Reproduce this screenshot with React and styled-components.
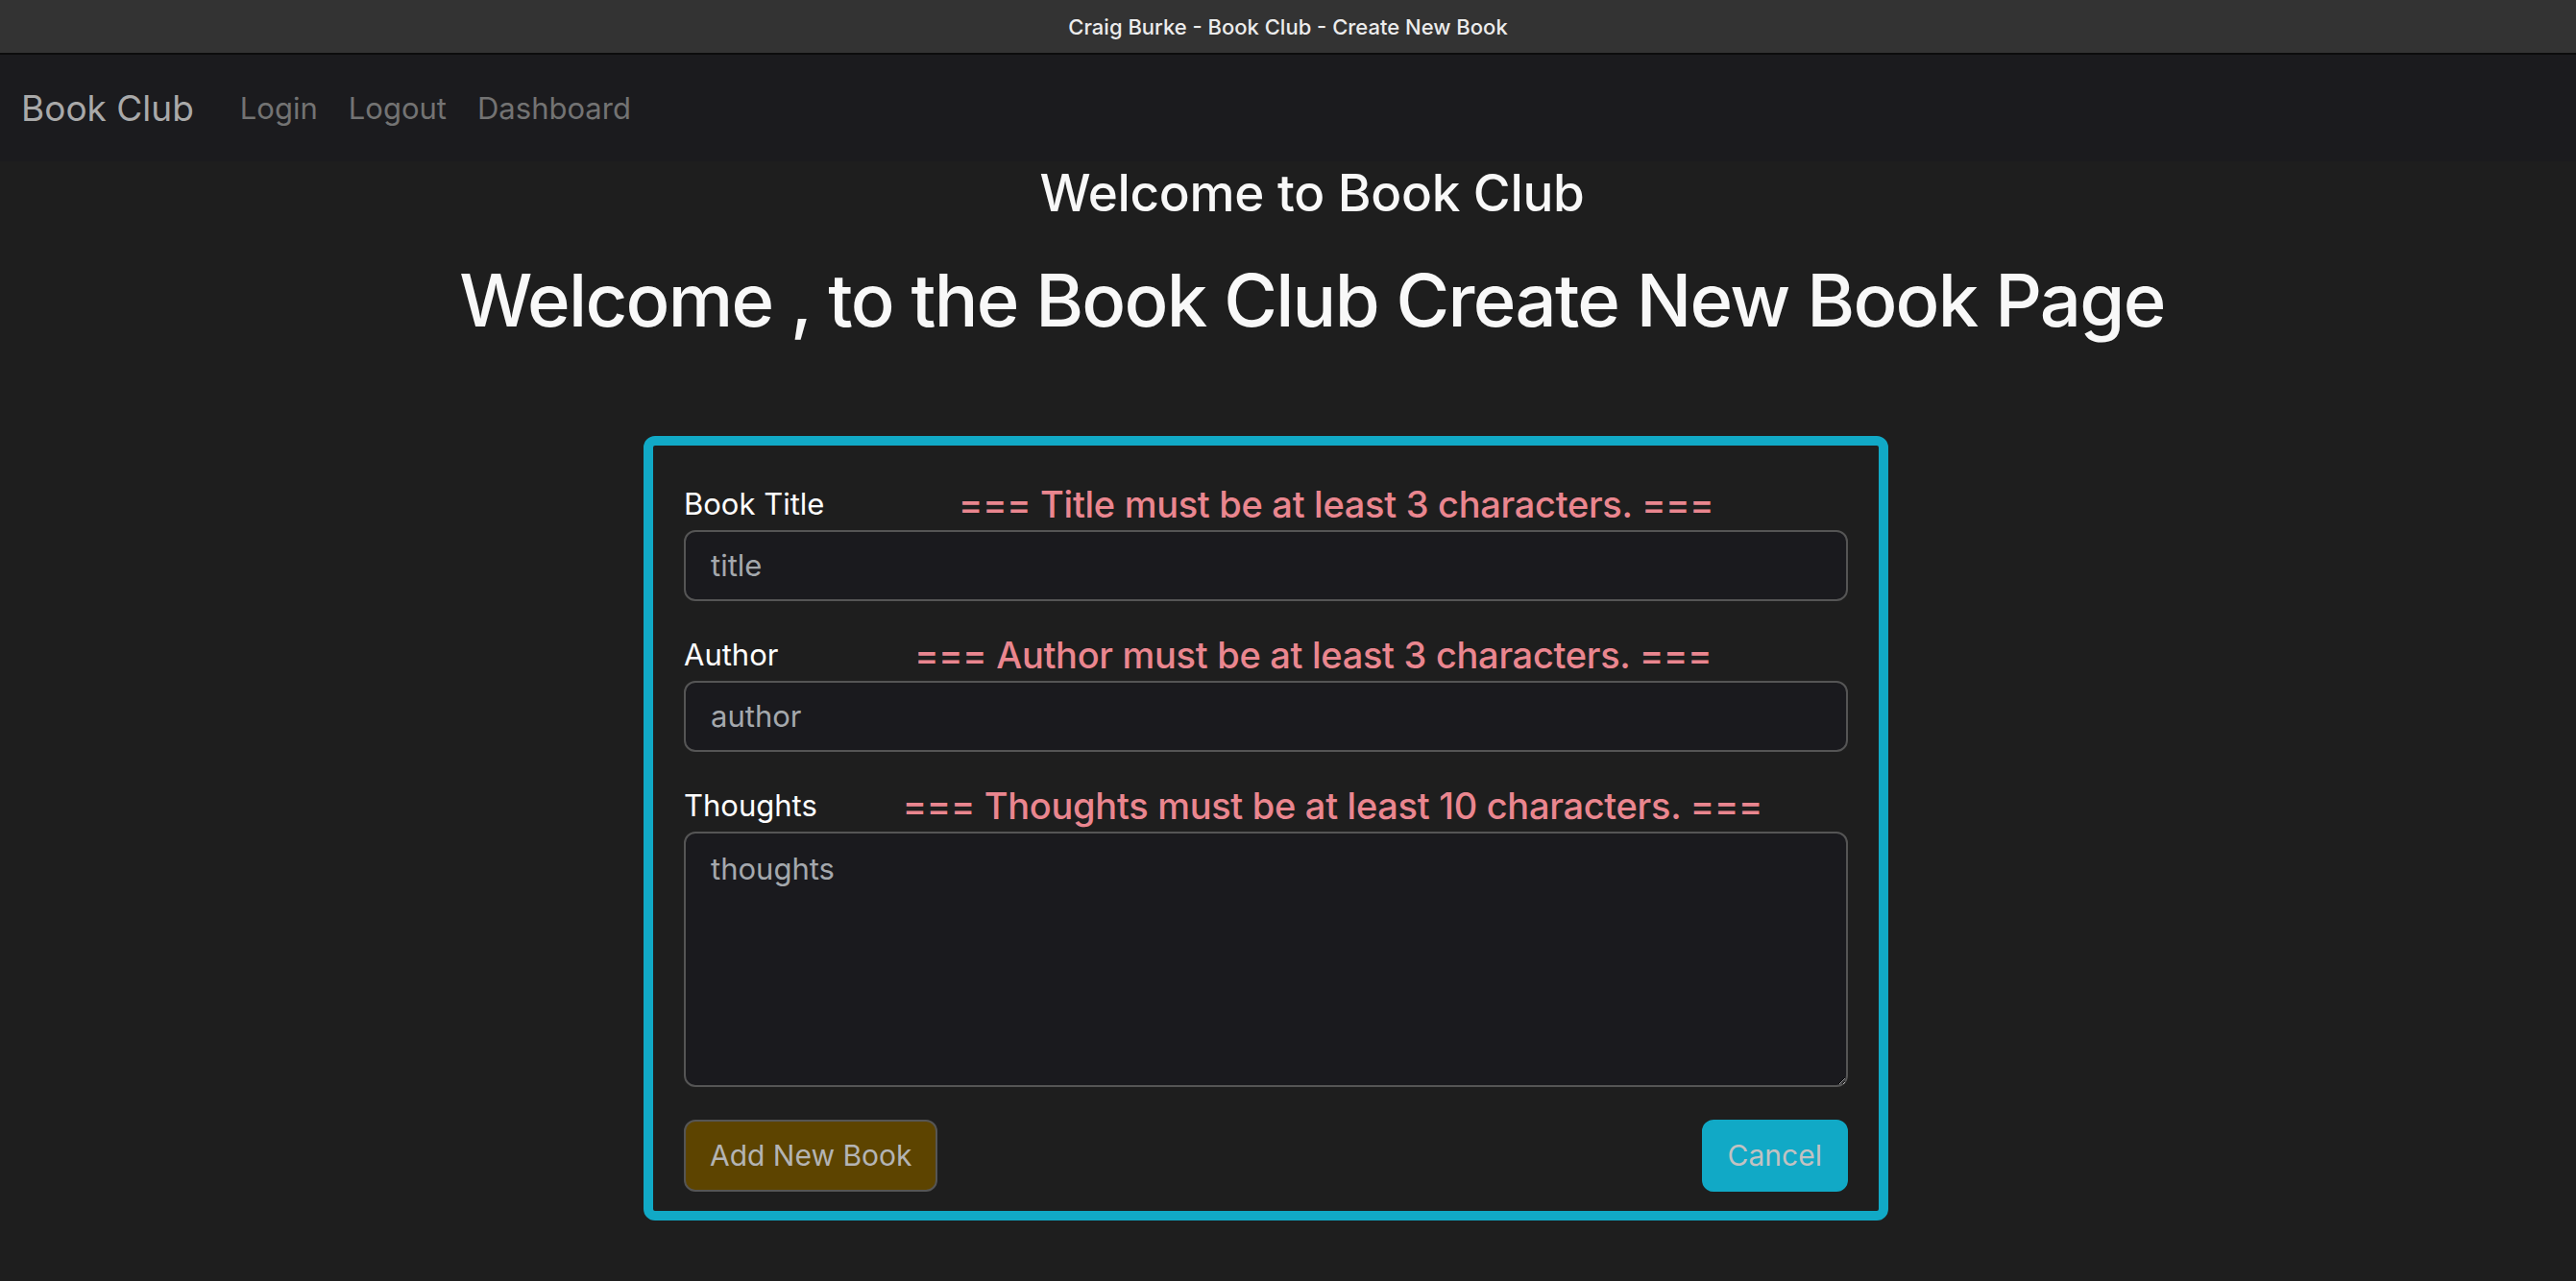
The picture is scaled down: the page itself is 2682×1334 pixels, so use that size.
import styled, { createGlobalStyle } from 'styled-components'

const GlobalStyle = createGlobalStyle`
  * { box-sizing: border-box; }
  html, body {
    margin: 0;
    padding: 0;
    background: #1e1e1e;
    font-family: Inter, "Noto Sans", "Liberation Sans", sans-serif;
    color: #f8f9fa;
  }
`

const Page = styled.div`
  min-height: 1334px;
  background: #1e1e1e;
`

const TitleBar = styled.div`
  height: 57px;
  background: #333333;
  border-bottom: 2px solid #0c0c0c;
  display: flex;
  align-items: center;
  justify-content: center;
  color: #ececec;
  font-size: 22px;
  font-weight: 500;
`

const NavBar = styled.nav`
  height: 111px;
  background: #1b1b1e;
  display: flex;
  align-items: center;
  padding: 0 22px;
`

const Brand = styled.a`
  font-size: 37px;
  color: #a9a9a9;
  text-decoration: none;
  margin-right: 48px;
`

const NavLinks = styled.div`
  display: flex;
  gap: 32px;
`

const NavLink = styled.a`
  font-size: 31px;
  color: #737373;
  text-decoration: none;
`

const Headings = styled.header`
  padding-left: 50px;
  text-align: center;
`

const SubTitle = styled.h3`
  margin: 2px 0 33px;
  font-size: 53px;
  font-weight: 500;
  letter-spacing: -0.3px;
  line-height: 1.2;
  color: #f8f8f8;
`

const MainTitle = styled.h1`
  margin: 0;
  font-size: 76px;
  font-weight: 500;
  letter-spacing: -1.7px;
  line-height: 1.2;
  color: #f8f8f8;
`

const FormCard = styled.form`
  width: 1296px;
  margin: 96px 0 0 670px;
  border: 10px solid #11a9c6;
  border-radius: 12px;
  padding: 37px 32px 20px;
`

const Group = styled.div`
  margin-bottom: 32px;
`

const LabelRow = styled.div`
  display: flex;
  align-items: center;
  height: 48px;
  margin-bottom: 3px;
`

const Label = styled.label`
  font-size: 31px;
  color: #ffffff;
`

const ErrorText = styled.span`
  flex: 1;
  text-align: center;
  font-size: 38px;
  font-weight: 500;
  letter-spacing: -0.3px;
  color: #ea868f;
`

const fieldStyles = `
  display: block;
  width: 100%;
  background: #1a1a1e;
  border: 2px solid #555;
  border-radius: 12px;
  color: #dee2e6;
  font-family: Inter, "Noto Sans", "Liberation Sans", sans-serif;
  font-size: 31px;
  padding: 0 26px;
  outline: none;
  &::placeholder { color: #a4a8ad; }
`

const Input = styled.input`
  ${fieldStyles}
  height: 74px;
`

const TextArea = styled.textarea`
  ${fieldStyles}
  height: 266px;
  padding-top: 14px;
  resize: vertical;
  line-height: 1.5;
`

const Actions = styled.div`
  display: flex;
  justify-content: space-between;
  padding-top: 2px;
`

const Button = styled.button`
  height: 75px;
  padding: 0 25px;
  border-radius: 12px;
  font-family: Inter, "Noto Sans", "Liberation Sans", sans-serif;
  font-size: 30px;
  color: ${({ $variant }) => ($variant === 'info' ? '#c2c2c2' : '#b4b4b4')};
  background: ${({ $variant }) => ($variant === 'info' ? '#11a9c6' : '#5d4400')};
  border: 2px solid ${({ $variant }) => ($variant === 'info' ? '#11a9c6' : '#555')};
  cursor: pointer;
`

const fields = [
  { label: 'Book Title', name: 'title', error: '=== Title must be at least 3 characters. ===' },
  { label: 'Author', name: 'author', error: '=== Author must be at least 3 characters. ===' },
]

const App = () => {
  return (
    <>
      <GlobalStyle />
      <Page>
        <TitleBar>Craig Burke - Book Club - Create New Book</TitleBar>
        <NavBar>
          <Brand href="#">Book Club</Brand>
          <NavLinks>
            <NavLink href="#">Login</NavLink>
            <NavLink href="#">Logout</NavLink>
            <NavLink href="#">Dashboard</NavLink>
          </NavLinks>
        </NavBar>
        <Headings>
          <SubTitle>Welcome to Book Club</SubTitle>
          <MainTitle>Welcome , to the Book Club Create New Book Page</MainTitle>
        </Headings>
        <FormCard onSubmit={(e) => e.preventDefault()}>
          {fields.map((f) => (
            <Group key={f.name}>
              <LabelRow>
                <Label htmlFor={f.name}>{f.label}</Label>
                <ErrorText>{f.error}</ErrorText>
              </LabelRow>
              <Input id={f.name} type="text" placeholder={f.name} />
            </Group>
          ))}
          <Group>
            <LabelRow>
              <Label htmlFor="thoughts">Thoughts</Label>
              <ErrorText>=== Thoughts must be at least 10 characters. ===</ErrorText>
            </LabelRow>
            <TextArea id="thoughts" placeholder="thoughts" />
          </Group>
          <Actions>
            <Button type="submit">Add New Book</Button>
            <Button type="button" $variant="info">Cancel</Button>
          </Actions>
        </FormCard>
      </Page>
    </>
  )
}

export default App
